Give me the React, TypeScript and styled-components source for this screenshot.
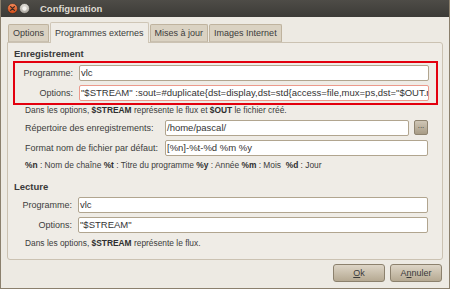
import React from 'react';
import styled, { createGlobalStyle } from 'styled-components';

const GlobalStyle = createGlobalStyle`
  html, body {
    margin: 0;
    padding: 0;
    background: #edeae3;
  }
  body {
    font-family: "Liberation Sans", Arial, sans-serif;
    font-size: 9px;
    color: #3c3c3c;
  }
`;

const Window = styled.div`
  width: 450px;
  height: 289px;
  box-sizing: border-box;
  background: #edeae3;
  border: 1px solid #8b806d;
  border-top: none;
  display: flex;
  flex-direction: column;
  overflow: hidden;
`;

const TitleBar = styled.div`
  height: 17px;
  margin: 0 -1px;
  background: linear-gradient(#4e4c47, #3c3b37);
  display: flex;
  align-items: center;
  padding-left: 7px;
  gap: 1px;
`;

const Title = styled.span`
  margin-left: 9px;
  color: #dfdbd2;
  font-weight: bold;
  font-size: 9.5px;
`;

const Body = styled.div`
  padding: 5px 6px 0 6px;
  display: flex;
  flex-direction: column;
`;

const Tabs = styled.div`
  display: flex;
  align-items: flex-end;
  height: 20px;
  padding-left: 1px;
  gap: 1px;
  position: relative;
  z-index: 1;
`;

const Tab = styled.div<{ $active?: boolean }>`
  box-sizing: border-box;
  height: ${p => (p.$active ? 21 : 18)}px;
  margin-bottom: ${p => (p.$active ? -1 : 0)}px;
  padding: 0 4px;
  display: flex;
  align-items: center;
  border: 1px solid ${p => (p.$active ? '#cfc6b6' : '#bfb39e')};
  border-bottom: ${p => (p.$active ? 'none' : '1px solid #c9c0b0')};
  border-radius: 2px 2px 0 0;
  background: ${p => (p.$active ? '#efece6' : '#dad2c2')};
  color: #3c3c3c;
`;

const Panel = styled.div`
  box-sizing: border-box;
  height: 218px;
  border: 1px solid #cbc2b2;
  border-radius: 0 3px 3px 3px;
  background: #efece6;
  padding: 0 0 0 6px;
  display: flex;
  flex-direction: column;
`;

const Heading = styled.div<{ $top: number }>`
  font-weight: bold;
  font-size: 9.5px;
  line-height: 12px;
  height: 12px;
  margin-top: ${p => p.$top}px;
  color: #3a3a3a;
`;

const Highlight = styled.div`
  margin-top: 1px;
  margin-left: -1px;
  width: 425px;
  box-sizing: border-box;
  border: 2px solid #e3000e;
  padding: 2px 0;
`;

const FormGrid = styled.div<{ $top?: number }>`
  display: grid;
  grid-template-columns: 58px 350px;
  column-gap: 6px;
  row-gap: 4px;
  margin-top: ${p => p.$top ?? 0}px;
`;

const FieldGridWide = styled.div`
  display: grid;
  grid-template-columns: 135px 244px 14px;
  column-gap: 5px;
  row-gap: 4px;
  margin-top: 5px;
  margin-left: 11px;
`;

const Label = styled.label<{ $left?: boolean }>`
  height: 16px;
  line-height: 16px;
  text-align: ${p => (p.$left ? 'left' : 'right')};
  white-space: nowrap;
  color: #3c3c3c;
`;

const Input = styled.div<{ $focus?: boolean; $span?: number }>`
  box-sizing: border-box;
  height: 16px;
  line-height: 14px;
  padding: 0 1px;
  font-size: 9.5px;
  background: #fff;
  border: 1px solid ${p => (p.$focus ? '#ec9a8c' : '#b1a58f')};
  border-radius: 2px;
  white-space: nowrap;
  overflow: hidden;
  color: #333;
  ${p => (p.$span ? `grid-column: span ${p.$span};` : '')}
`;

const SmallButton = styled.div`
  box-sizing: border-box;
  width: 14px;
  height: 15px;
  border: 1px solid #8f8470;
  border-radius: 2px;
  background: linear-gradient(#cfc6b6, #a89c86);
  font-size: 8px;
  line-height: 10px;
  text-align: center;
  color: #333;
`;

const Help = styled.div<{ $top: number; $left: number }>`
  line-height: 10px;
  height: 10px;
  font-size: 8.4px;
  margin-top: ${p => p.$top}px;
  margin-left: ${p => p.$left}px;
  white-space: nowrap;
  color: #3c3c3c;
  & b {
    color: #2e2e2e;
  }
`;

const Footer = styled.div`
  display: flex;
  justify-content: flex-end;
  gap: 5px;
  margin-top: 4px;
  padding-right: 1px;
`;

const Button = styled.button`
  box-sizing: border-box;
  width: 52px;
  height: 18px;
  padding: 0;
  border: 1px solid #8c816d;
  border-radius: 3px;
  background: linear-gradient(#ddd5c6, #b5a992);
  font-family: inherit;
  font-size: 9px;
  color: #3a3a3a;
  & u {
    text-decoration-thickness: 1px;
  }
`;

function WindowButtons() {
  return (
    <>
      <svg width="11" height="11" viewBox="0 0 11 11">
        <defs>
          <linearGradient id="cl" x1="0" y1="0" x2="0" y2="1">
            <stop offset="0" stopColor="#f58a5a" />
            <stop offset="1" stopColor="#d04a16" />
          </linearGradient>
        </defs>
        <circle cx="5.5" cy="5.5" r="5" fill="url(#cl)" stroke="#2e2d2a" strokeWidth="0.6" />
        <path d="M3.6 3.6 L7.4 7.4 M7.4 3.6 L3.6 7.4" stroke="#3c2a22" strokeWidth="1.3" strokeLinecap="round" />
      </svg>
      <svg width="11" height="11" viewBox="0 0 11 11">
        <defs>
          <linearGradient id="mn" x1="0" y1="0" x2="0" y2="1">
            <stop offset="0" stopColor="#e4e1db" />
            <stop offset="1" stopColor="#a9a59d" />
          </linearGradient>
        </defs>
        <circle cx="5.5" cy="5.5" r="5" fill="url(#mn)" stroke="#2e2d2a" strokeWidth="0.6" />
        <circle cx="5.5" cy="5.5" r="2.2" fill="#f4f2ee" />
      </svg>
    </>
  );
}

export default function App() {
  return (
    <>
      <GlobalStyle />
      <Window>
        <TitleBar>
          <WindowButtons />
          <Title>Configuration</Title>
        </TitleBar>
        <Body>
          <Tabs>
            <Tab>Options</Tab>
            <Tab $active>Programmes externes</Tab>
            <Tab>Mises à jour</Tab>
            <Tab>Images Internet</Tab>
          </Tabs>
          <Panel>
            <Heading $top={5}>Enregistrement</Heading>
            <Highlight>
              <FormGrid>
                <Label>Programme:</Label>
                <Input>vlc</Input>
                <Label>Options:</Label>
                <Input $focus>
                  "$STREAM" :sout=#duplicate{'{'}dst=display,dst=std{'{'}access=file,mux=ps,dst="$OUT.mpg"{'}'}{'}'}
                </Input>
              </FormGrid>
            </Highlight>
            <Help $top={0} $left={11}>
              Dans les options, <b>$STREAM</b> représente le flux et <b>$OUT</b> le fichier créé.
            </Help>
            <FieldGridWide>
              <Label $left>Répertoire des enregistrements:</Label>
              <Input>/home/pascal/</Input>
              <SmallButton>...</SmallButton>
              <Label $left>Format nom de fichier par défaut:</Label>
              <Input $span={2}>[%n]-%t-%d %m %y</Input>
            </FieldGridWide>
            <Help $top={4} $left={11}>
              <b>%n</b> : Nom de chaîne <b>%t</b> : Titre du programme <b>%y</b> : Année <b>%m</b> : Mois&nbsp; <b>%d</b> : Jour
            </Help>
            <Heading $top={11}>Lecture</Heading>
            <FormGrid $top={4}>
              <Label>Programme:</Label>
              <Input>vlc</Input>
              <Label>Options:</Label>
              <Input>"$STREAM"</Input>
            </FormGrid>
            <Help $top={5} $left={11}>
              Dans les options, <b>$STREAM</b> représente le flux.
            </Help>
          </Panel>
          <Footer>
            <Button>
              <u>O</u>k
            </Button>
            <Button>
              A<u>n</u>nuler
            </Button>
          </Footer>
        </Body>
      </Window>
    </>
  );
}
